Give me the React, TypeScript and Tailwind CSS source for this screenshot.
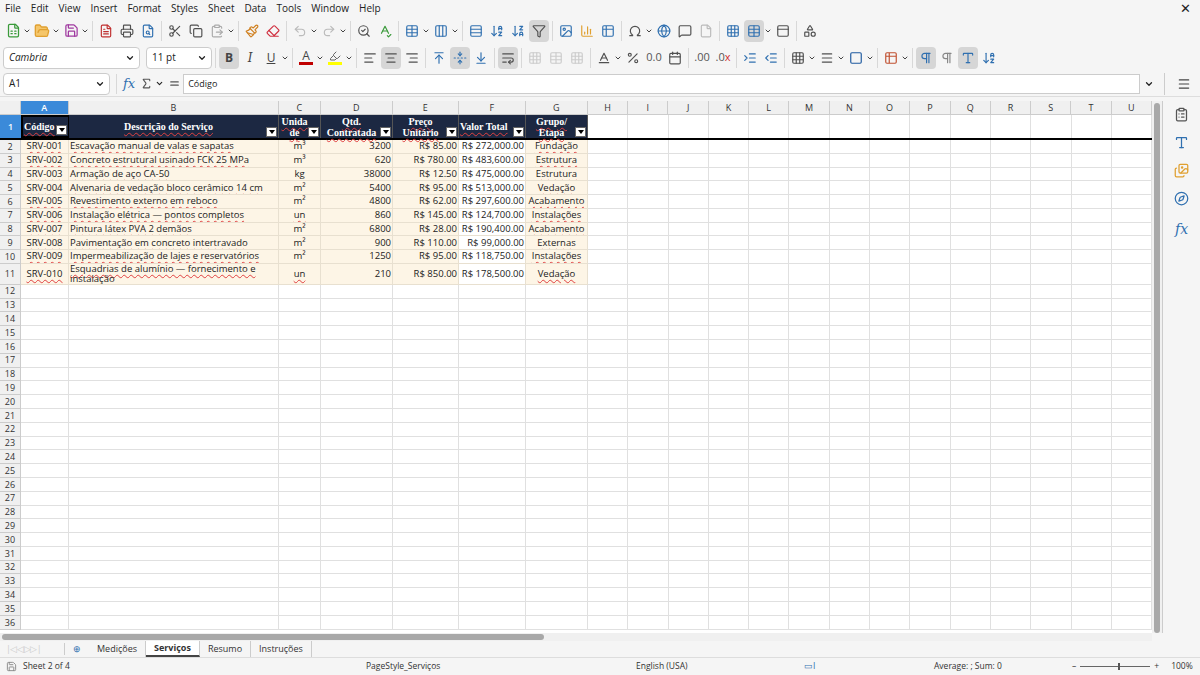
import {
  FileSpreadsheet, FolderOpen, Save, FileText, Printer, FileSearch, Scissors, Copy, ClipboardPaste,
  Paintbrush, Eraser, Undo2, Redo2, SearchCheck, SpellCheck, Table, Columns3, ArrowDownAZ, ArrowDownZA,
  Filter, Image, BarChart3, Table2, Omega, Globe, MessageSquare, File, Grid3x3, PanelTop, Shapes,
  AlignLeft, AlignCenter, AlignRight, ArrowUpToLine, FoldVertical, ArrowDownToLine, WrapText,
  Percent, Calendar, IndentIncrease, IndentDecrease, Square, Menu, Type, Images, Compass,
  ChevronDown, Sigma, Equal, Pilcrow, Baseline, Highlighter, Rows3, ClipboardList,
} from 'lucide-react';

const cols = [
  { k: 'A', w: 'w-[48px]' }, { k: 'B', w: 'w-[210px]' }, { k: 'C', w: 'w-[42px]' }, { k: 'D', w: 'w-[72px]' },
  { k: 'E', w: 'w-[66px]' }, { k: 'F', w: 'w-[67px]' }, { k: 'G', w: 'w-[62px]' },
];
const rest = ['H', 'I', 'J', 'K', 'L', 'M', 'N', 'O', 'P', 'Q', 'R', 'S', 'T', 'U'];

const data = [
  ['SRV-001', 'Escavação manual de valas e sapatas', 'm³', '3200', 'R$ 85.00', 'R$ 272,000.00', 'Fundação'],
  ['SRV-002', 'Concreto estrutural usinado FCK 25 MPa', 'm³', '620', 'R$ 780.00', 'R$ 483,600.00', 'Estrutura'],
  ['SRV-003', 'Armação de aço CA-50', 'kg', '38000', 'R$ 12.50', 'R$ 475,000.00', 'Estrutura'],
  ['SRV-004', 'Alvenaria de vedação bloco cerâmico 14 cm', 'm²', '5400', 'R$ 95.00', 'R$ 513,000.00', 'Vedação'],
  ['SRV-005', 'Revestimento externo em reboco', 'm²', '4800', 'R$ 62.00', 'R$ 297,600.00', 'Acabamento'],
  ['SRV-006', 'Instalação elétrica — pontos completos', 'un', '860', 'R$ 145.00', 'R$ 124,700.00', 'Instalações'],
  ['SRV-007', 'Pintura látex PVA 2 demãos', 'm²', '6800', 'R$ 28.00', 'R$ 190,400.00', 'Acabamento'],
  ['SRV-008', 'Pavimentação em concreto intertravado', 'm²', '900', 'R$ 110.00', 'R$ 99,000.00', 'Externas'],
  ['SRV-009', 'Impermeabilização de lajes e reservatórios', 'm²', '1250', 'R$ 95.00', 'R$ 118,750.00', 'Instalações'],
  ['SRV-010', 'Esquadrias de alumínio — fornecimento e instalação', 'un', '210', 'R$ 850.00', 'R$ 178,500.00', 'Vedação'],
];
const heads = ['Código', 'Descrição do Serviço', 'Unida de', 'Qtd. Contratada', 'Preço Unitário', 'Valor Total', 'Grupo/ Etapa'];

const wavy = 'underline decoration-wavy decoration-[#e04040] decoration-1 underline-offset-2';

function Btn({ children, on, dd }: { children: React.ReactNode; on?: boolean; dd?: boolean }) {
  return (
    <div className="flex items-center">
      <div className={`h-[22px] min-w-[20px] px-[1px] flex items-center justify-center rounded-sm ${on ? 'bg-[#d6d6d6]' : ''}`}>{children}</div>
      {dd && <ChevronDown className="w-[8px] h-[8px] text-[#444]" strokeWidth={3} />}
    </div>
  );
}
const Sep = () => <div className="w-px h-[20px] bg-[#d8d8d8] mx-[2px]" />;
const ic = 'w-[14px] h-[14px] text-[#505050]';
const bl = 'w-[14px] h-[14px] text-[#3070b0]';

function Filt() {
  return <span className="absolute right-[1px] bottom-[1px] w-[11px] h-[10px] bg-white border border-[#666] flex items-center justify-center"><span className="border-l-[3px] border-r-[3px] border-t-[4px] border-l-transparent border-r-transparent border-t-black" /></span>;
}

export default function App() {
  return (
    <div className="w-[1200px] h-[675px] bg-[#f5f5f5] flex flex-col overflow-hidden text-[#222]" style={{ fontFamily: '"Open Sans", sans-serif' }}>
      {/* menu */}
      <div className="h-[17px] flex items-center text-[10px] px-[5px] gap-[10px]">
        {['File', 'Edit', 'View', 'Insert', 'Format', 'Styles', 'Sheet', 'Data', 'Tools', 'Window', 'Help'].map(m => <span key={m}>{m}</span>)}
        <span className="ml-auto text-[13px] mr-[4px]">✕</span>
      </div>
      {/* toolbar 1 */}
      <div className="h-[27px] flex items-center px-[3px] gap-[1px]">
        <Btn dd><FileSpreadsheet className="w-[15px] h-[15px] text-[#3a9a3a]" /></Btn>
        <Btn dd><FolderOpen className="w-[16px] h-[16px] text-[#e0a030] fill-[#f5c66a]" /></Btn>
        <Btn dd><Save className="w-[15px] h-[15px] text-[#a03aa0]" /></Btn><Sep />
        <Btn><FileText className="w-[14px] h-[14px] text-[#c03030]" /></Btn>
        <Btn><Printer className={ic} /></Btn>
        <Btn><FileSearch className={bl} /></Btn><Sep />
        <Btn><Scissors className={ic} /></Btn><Btn><Copy className={ic} /></Btn>
        <Btn dd><ClipboardPaste className="w-[14px] h-[14px] text-[#aaa]" /></Btn><Sep />
        <Btn><Paintbrush className="w-[14px] h-[14px] text-[#d08020]" /></Btn>
        <Btn><Eraser className="w-[14px] h-[14px] text-[#d03040]" /></Btn><Sep />
        <Btn dd><Undo2 className="w-[14px] h-[14px] text-[#bbb]" /></Btn>
        <Btn dd><Redo2 className="w-[14px] h-[14px] text-[#bbb]" /></Btn><Sep />
        <Btn><SearchCheck className={ic} /></Btn><Btn><SpellCheck className="w-[14px] h-[14px] text-[#3a9a3a]" /></Btn><Sep />
        <Btn dd><Table className={bl} /></Btn>
        <Btn dd><Columns3 className={bl} /></Btn><Sep />
        <Btn><Rows3 className={bl} /></Btn>
        <Btn><ArrowDownAZ className={bl} /></Btn>
        <Btn><ArrowDownZA className={bl} /></Btn>
        <Btn on><Filter className="w-[14px] h-[14px] text-[#505050]" /></Btn><Sep />
        <Btn><Image className={bl} /></Btn>
        <Btn><BarChart3 className="w-[14px] h-[14px] text-[#e0a030]" /></Btn>
        <Btn><Table2 className={bl} /></Btn><Sep />
        <Btn dd><Omega className={ic} /></Btn>
        <Btn><Globe className={bl} /></Btn>
        <Btn><MessageSquare className={ic} /></Btn>
        <Btn><File className="w-[14px] h-[14px] text-[#bbb]" /></Btn><Sep />
        <Btn><Grid3x3 className={bl} /></Btn>
        <Btn on dd><Table className={bl} /></Btn>
        <Btn><PanelTop className={ic} /></Btn><Sep />
        <Btn><Shapes className={ic} /></Btn>
      </div>
      {/* toolbar 2 */}
      <div className="h-[27px] flex items-center px-[3px] gap-[1px]">
        <div className="w-[137px] h-[22px] bg-white border border-[#ccc] rounded-sm flex items-center pl-[5px] text-[10px] italic">Cambria<ChevronDown className="ml-auto mr-[4px] w-[10px] h-[10px]" strokeWidth={3} /></div>
        <div className="ml-[5px] w-[66px] h-[22px] bg-white border border-[#ccc] rounded-sm flex items-center pl-[5px] text-[10px]">11 pt<ChevronDown className="ml-auto mr-[4px] w-[10px] h-[10px]" strokeWidth={3} /></div>
        <Sep />
        <Btn on><span className="text-[12px] font-bold text-[#444]">B</span></Btn>
        <Btn><span className="text-[12px] italic text-[#444]" style={{ fontFamily: '"DejaVu Serif", serif' }}>I</span></Btn>
        <Btn dd><span className="text-[12px] underline text-[#444]">U</span></Btn><Sep />
        <Btn dd><div className="flex flex-col items-center"><span className="text-[12px] leading-none text-[#444]">A</span><span className="w-[14px] h-[3px] bg-[#c00000]" /></div></Btn>
        <Btn dd><div className="flex flex-col items-center"><Highlighter className="w-[12px] h-[12px] text-[#666]" /><span className="w-[14px] h-[3px] bg-[#ffff00]" /></div></Btn><Sep />
        <Btn><AlignLeft className={ic} /></Btn><Btn on><AlignCenter className={ic} /></Btn><Btn><AlignRight className={ic} /></Btn><Sep />
        <Btn><ArrowUpToLine className={bl} /></Btn>
        <Btn on><FoldVertical className={bl} /></Btn>
        <Btn><ArrowDownToLine className={bl} /></Btn><Sep />
        <Btn on><WrapText className={ic} /></Btn><Sep />
        <Btn><Grid3x3 className="w-[14px] h-[14px] text-[#ccc]" /></Btn><Btn><Table className="w-[14px] h-[14px] text-[#ccc]" /></Btn><Btn><Grid3x3 className="w-[14px] h-[14px] text-[#ccc]" /></Btn><Sep />
        <Btn dd><Baseline className={ic} /></Btn>
        <Btn><Percent className={ic} /></Btn>
        <Btn><span className="text-[11px] text-[#555]">0.0</span></Btn>
        <Btn><Calendar className={ic} /></Btn><Sep />
        <Btn><span className="text-[11px] text-[#555]">.00</span></Btn>
        <Btn><span className="text-[11px] text-[#555]">.0<span className="text-[#d03030]">x</span></span></Btn><Sep />
        <Btn><IndentIncrease className={bl} /></Btn>
        <Btn><IndentDecrease className={bl} /></Btn><Sep />
        <Btn dd><Grid3x3 className={ic} /></Btn>
        <Btn dd><Menu className={ic} /></Btn>
        <Btn dd><Square className="w-[14px] h-[14px] text-[#1e5aa0]" /></Btn><Sep />
        <Btn dd><Table2 className="w-[14px] h-[14px] text-[#c05030]" /></Btn><Sep />
        <Btn on><Pilcrow className="w-[14px] h-[14px] text-[#3070b0]" /></Btn>
        <Btn><Pilcrow className="w-[14px] h-[14px] text-[#888]" /></Btn>
        <Btn on><Type className="w-[14px] h-[14px] text-[#3070b0]" /></Btn>
        <Btn><ArrowDownAZ className="w-[14px] h-[14px] text-[#3070b0]" /></Btn>
      </div>
      {/* formula bar */}
      <div className="h-[26px] flex items-center px-[3px] border-b border-[#ddd]">
        <div className="w-[107px] h-[22px] bg-white border border-[#ccc] rounded-sm flex items-center pl-[5px] text-[10px]">A1<ChevronDown className="ml-auto mr-[4px] w-[10px] h-[10px]" strokeWidth={3} /></div>
        <div className="w-px h-[20px] bg-[#d8d8d8] mx-[6px]" />
        <span className="text-[13px] italic text-[#3070b0] mr-[5px]" style={{ fontFamily: '"DejaVu Serif", serif' }}>fx</span>
        <Sigma className="w-[13px] h-[13px] text-[#555]" /><ChevronDown className="w-[9px] h-[9px] mx-[2px]" strokeWidth={3} />
        <Equal className="w-[13px] h-[13px] text-[#555] mx-[2px]" />
        <div className="flex-1 h-[20px] bg-white border border-[#ccc] flex items-center pl-[4px] text-[9px]">Código</div>
        <ChevronDown className="w-[10px] h-[10px] mx-[4px]" strokeWidth={3} />
        <div className="w-px h-[22px] bg-[#ccc] mx-[6px]" />
        <Menu className="w-[14px] h-[14px] text-[#444] mx-[6px]" />
      </div>
      {/* main */}
      <div className="flex-1 flex min-h-0 pt-[4px]">
        <div className="flex flex-col w-[1152px] bg-white overflow-hidden text-[9.5px]" style={{ fontFamily: '"Open Sans", sans-serif' }}>
          <div className="flex h-[14px] shrink-0 bg-[#f0f0f0] text-[9px] text-[#333]">
            <div className="w-[21px] border-r border-b border-[#ccc]" />
            {cols.map(c => <div key={c.k} className={`${c.w} shrink-0 border-r border-b border-[#ccc] flex items-center justify-center ${c.k === 'A' ? 'bg-[#3b8ad9] text-white font-semibold' : ''}`}>{c.k}</div>)}
            {rest.map(c => <div key={c} className="w-[40.3px] shrink-0 border-r border-b border-[#ccc] flex items-center justify-center">{c}</div>)}
          </div>
          <div className="flex h-[25px] shrink-0 border-b-2 border-black">
            <div className="w-[21px] shrink-0 bg-[#3b8ad9] text-white font-semibold flex items-center justify-center text-[9px]">1</div>
            {cols.map((c, i) => (
              <div key={c.k} className={`${c.w} shrink-0 relative bg-[#1c2842] text-white font-bold border-r border-[#555] flex items-center leading-[11px] ${i === 0 ? 'justify-start pl-[1px] border-2 border-black' : i === 5 ? 'justify-start pl-[1px]' : 'justify-center text-center pr-[10px]'}`} style={{ fontFamily: '"Liberation Serif", serif', fontSize: 10 }}>
                <span className={wavy}>{heads[i]}</span><Filt />
              </div>
            ))}
            {rest.map(c => <div key={c} className="w-[40.3px] shrink-0 border-r border-[#e0e0e0]" />)}
          </div>
          {data.map((r, ri) => (
            <div key={ri} className={`flex shrink-0 ${ri === 9 ? 'h-[21px]' : 'h-[13.75px]'}`}>
              <div className="w-[21px] shrink-0 bg-[#f0f0f0] border-r border-b border-[#ccc] flex items-center justify-center text-[9px] text-[#333]">{ri + 2}</div>
              {cols.map((c, i) => (
                <div key={c.k} className={`${c.w} shrink-0 border-r border-b border-[#e8e0d0] flex items-center px-[1px] leading-[10px] overflow-hidden ${i === 1 ? 'whitespace-normal' : 'whitespace-nowrap'} ${i === 0 || i === 2 || i === 6 ? 'justify-center' : i === 1 ? '' : 'justify-end'} ${i === 5 ? 'bg-white' : 'bg-[#fdf5e6]'}`}>
                  <span className={i === 0 || i === 1 || i === 6 || r[i] === 'un' ? wavy : ''}>{r[i]}</span>
                </div>
              ))}
              {rest.map(c => <div key={c} className="w-[40.3px] shrink-0 border-r border-b border-[#e0e0e0]" />)}
            </div>
          ))}
          {Array.from({ length: 25 }, (_, k) => (
            <div key={k} className="flex h-[13.8px] shrink-0">
              <div className="w-[21px] shrink-0 bg-[#f0f0f0] border-r border-b border-[#ccc] flex items-center justify-center text-[9px] text-[#333]">{k + 12}</div>
              {cols.map(c => <div key={c.k} className={`${c.w} shrink-0 border-r border-b border-[#e0e0e0]`} />)}
              {rest.map(c => <div key={c} className="w-[40.3px] shrink-0 border-r border-b border-[#e0e0e0]" />)}
            </div>
          ))}
        </div>
        <div className="w-[10px] bg-[#f0f0f0] flex justify-center pt-[2px]"><div className="w-[6px] h-[530px] bg-[#a8a8a8] rounded-sm" /></div>
        <div className="w-[38px] border-l border-[#ccc] flex flex-col items-center gap-[13px] pt-[6px]">
          <ClipboardList className="w-[15px] h-[15px] text-[#555]" />
          <Type className="w-[15px] h-[15px] text-[#3070b0]" />
          <Images className="w-[15px] h-[15px] text-[#e0a030]" />
          <Compass className="w-[15px] h-[15px] text-[#3070b0]" />
          <span className="text-[14px] italic text-[#3070b0]" style={{ fontFamily: '"DejaVu Serif", serif' }}>fx</span>
        </div>
      </div>
      <div className="h-[8px] bg-[#f0f0f0] flex items-center pl-[2px] w-[1152px]"><div className="w-[542px] h-[6px] bg-[#a8a8a8] rounded-sm" /></div>
      <div className="h-[17px] flex items-center text-[9px] text-[#333] border-b border-[#ddd]">
        <span className="w-[64px] pl-[6px] text-[#ccc] tracking-tighter">|◁◁▷▷|</span>
        <span className="w-px h-[12px] bg-[#ccc]" />
        <span className="px-[8px] text-[#3070b0]">⊕</span>
        {['Medições', 'Serviços', 'Resumo', 'Instruções'].map(t => (
          <span key={t} className={`px-[8px] h-full flex items-center border-r border-[#ccc] ${t === 'Serviços' ? 'font-bold bg-white border-b-2 border-b-[#444]' : ''}`}>{t}</span>
        ))}
      </div>
      <div className="h-[17px] flex items-center text-[8.5px] text-[#333]">
        <Save className="w-[11px] h-[11px] mx-[6px] text-[#888]" />
        <span className="w-[343px]">Sheet 2 of 4</span>
        <span className="w-[270px]">PageStyle_Serviços</span>
        <span className="w-[168px]">English (USA)</span>
        <span className="w-[130px] text-[#3070b0]">▭I</span>
        <span className="w-[138px]">Average: ; Sum: 0</span>
        <span className="flex items-center gap-[4px]">– <span className="w-[70px] h-px bg-[#666] relative"><span className="absolute left-[38px] -top-[3px] w-[2px] h-[7px] bg-[#555]" /></span> + <span className="ml-[8px]">100%</span></span>
      </div>
    </div>
  );
}
